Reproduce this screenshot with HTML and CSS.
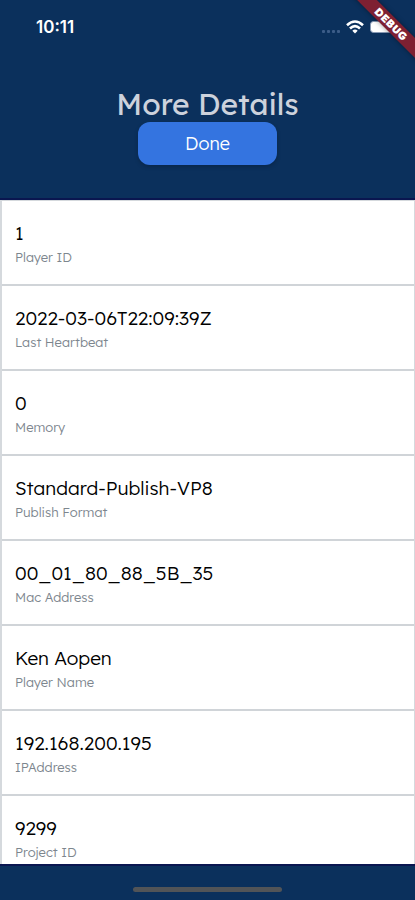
FILE: index.html
```html
<!DOCTYPE html>
<html lang="en">
<head>
<meta charset="utf-8">
<meta name="viewport" content="width=device-width, initial-scale=1">
<title>More Details</title>
<link rel="stylesheet" href="styles.css">
</head>
<body>
<div class="screen">
  <div class="debug"><span class="debug-band">DEBUG</span></div>
  <div class="status">
    <time class="clock">10:11</time>
    <div class="status-icons">
      <svg class="signal" width="18" height="4" viewBox="0 0 18 4" aria-hidden="true"><g fill="#3c5c88"><rect width="3" height="3" rx="1"/><rect x="5" width="3" height="3" rx="1"/><rect x="10" width="3" height="3" rx="1"/><rect x="15" width="3" height="3" rx="1"/></g></svg>
      <svg width="18" height="14" viewBox="0 0 18 14" aria-hidden="true"><g fill="none" stroke="#fff" stroke-width="2.6"><path d="M1 5.2Q9-2.2 17 5.2"/><path d="M4 8.5Q9 3.9 14 8.5"/></g><path d="M6.3 10.7Q9 8.5 11.7 10.7L9 13.5Z" fill="#fff"/></svg>
      <svg class="battery" width="25" height="12" viewBox="0 0 25 12" aria-hidden="true"><rect x=".5" y=".5" width="22" height="11" rx="3" fill="#fff" stroke="#8799b4"/><path d="M24 4v4q1-.5 1-2t-1-2Z" fill="#8799b4"/></svg>
    </div>
  </div>
  <header class="header">
    <h1>More Details</h1>
    <button class="done" type="button">Done</button>
  </header>
  <main class="content">
    <dl class="details">
      <div class="row"><dt>Player ID</dt><dd>1</dd></div>
      <div class="row"><dt>Last Heartbeat</dt><dd>2022-03-06T22:09:39Z</dd></div>
      <div class="row"><dt>Memory</dt><dd>0</dd></div>
      <div class="row"><dt>Publish Format</dt><dd>Standard-Publish-VP8</dd></div>
      <div class="row"><dt>Mac Address</dt><dd>00_01_80_88_5B_35</dd></div>
      <div class="row"><dt>Player Name</dt><dd>Ken Aopen</dd></div>
      <div class="row"><dt>IPAddress</dt><dd>192.168.200.195</dd></div>
      <div class="row"><dt>Project ID</dt><dd>9299</dd></div>
    </dl>
  </main>
  <footer class="bottom"><div class="home-bar"></div></footer>
</div>
</body>
</html>
```
FILE: styles.css
```css
* {
  box-sizing: border-box;
}

body {
  margin: 0;
  font-family: Lexend, Inter, "Liberation Sans", sans-serif;
  background: #0b305c;
}

.screen {
  position: relative;
  display: flex;
  flex-direction: column;
  height: 100vh;
  overflow: hidden;
}

.status {
  display: flex;
  flex: none;
  align-items: center;
  justify-content: space-between;
  height: 54px;
  padding: 0 20px 0 36px;
  color: #fff;
}

.clock {
  font-family: Inter, "Liberation Sans", sans-serif;
  font-size: 17px;
  font-weight: 600;
}

.status-icons {
  display: flex;
  align-items: center;
  gap: 6px;
}

.signal {
  align-self: flex-end;
}

.debug {
  position: absolute;
  top: 0;
  right: 0;
  z-index: 1;
  width: 80px;
  height: 80px;
  overflow: hidden;
}

.debug-band {
  position: absolute;
  top: 17px;
  right: -36px;
  width: 120px;
  height: 14px;
  color: #fff;
  font-size: 11px;
  font-weight: 900;
  line-height: 14px;
  text-align: center;
  background: #7e2032;
  box-shadow: 0 0 5px rgb(0 0 0 / 40%);
  transform: rotate(45deg);
}

.header {
  display: flex;
  flex: none;
  flex-direction: column;
  align-items: center;
  padding: 32px 16px 33px;
  border-bottom: 2px solid #0a1650;
}

h1 {
  margin: 0;
  color: #cdd2dc;
  font-size: 30px;
  font-weight: 400;
  line-height: 36px;
}

.done {
  width: 139px;
  height: 43px;
  padding: 0;
  border: 0;
  border-radius: 12px;
  color: #fff;
  font: inherit;
  font-size: 18px;
  font-weight: 300;
  background: #3474e0;
  box-shadow: 0 2px 4px rgb(0 0 0 / 20%);
}

.content {
  flex: 1;
  min-height: 0;
  overflow: hidden;
  background: #fff;
}

.details {
  margin: 0;
  border: solid #d5d9dd;
  border-width: 1px 1px 0 2px;
}

.row {
  display: flex;
  flex-direction: column-reverse;
  gap: 2px;
  padding: 19px 13px 18px;
  border-bottom: 2px solid #d0d4d8;
}

dd {
  margin: 0;
  color: #000;
  font-size: 19px;
  font-weight: 300;
  line-height: 26px;
}

dt {
  color: #7d868e;
  font-size: 13px;
  font-weight: 300;
  line-height: 18px;
}

.bottom {
  display: flex;
  flex: none;
  align-items: center;
  justify-content: center;
  height: 36px;
  padding-top: 12px;
  border-top: 2px solid #0a1650;
}

.home-bar {
  width: 36%;
  height: 5px;
  border-radius: 3px;
  background: #525457;
}
```
